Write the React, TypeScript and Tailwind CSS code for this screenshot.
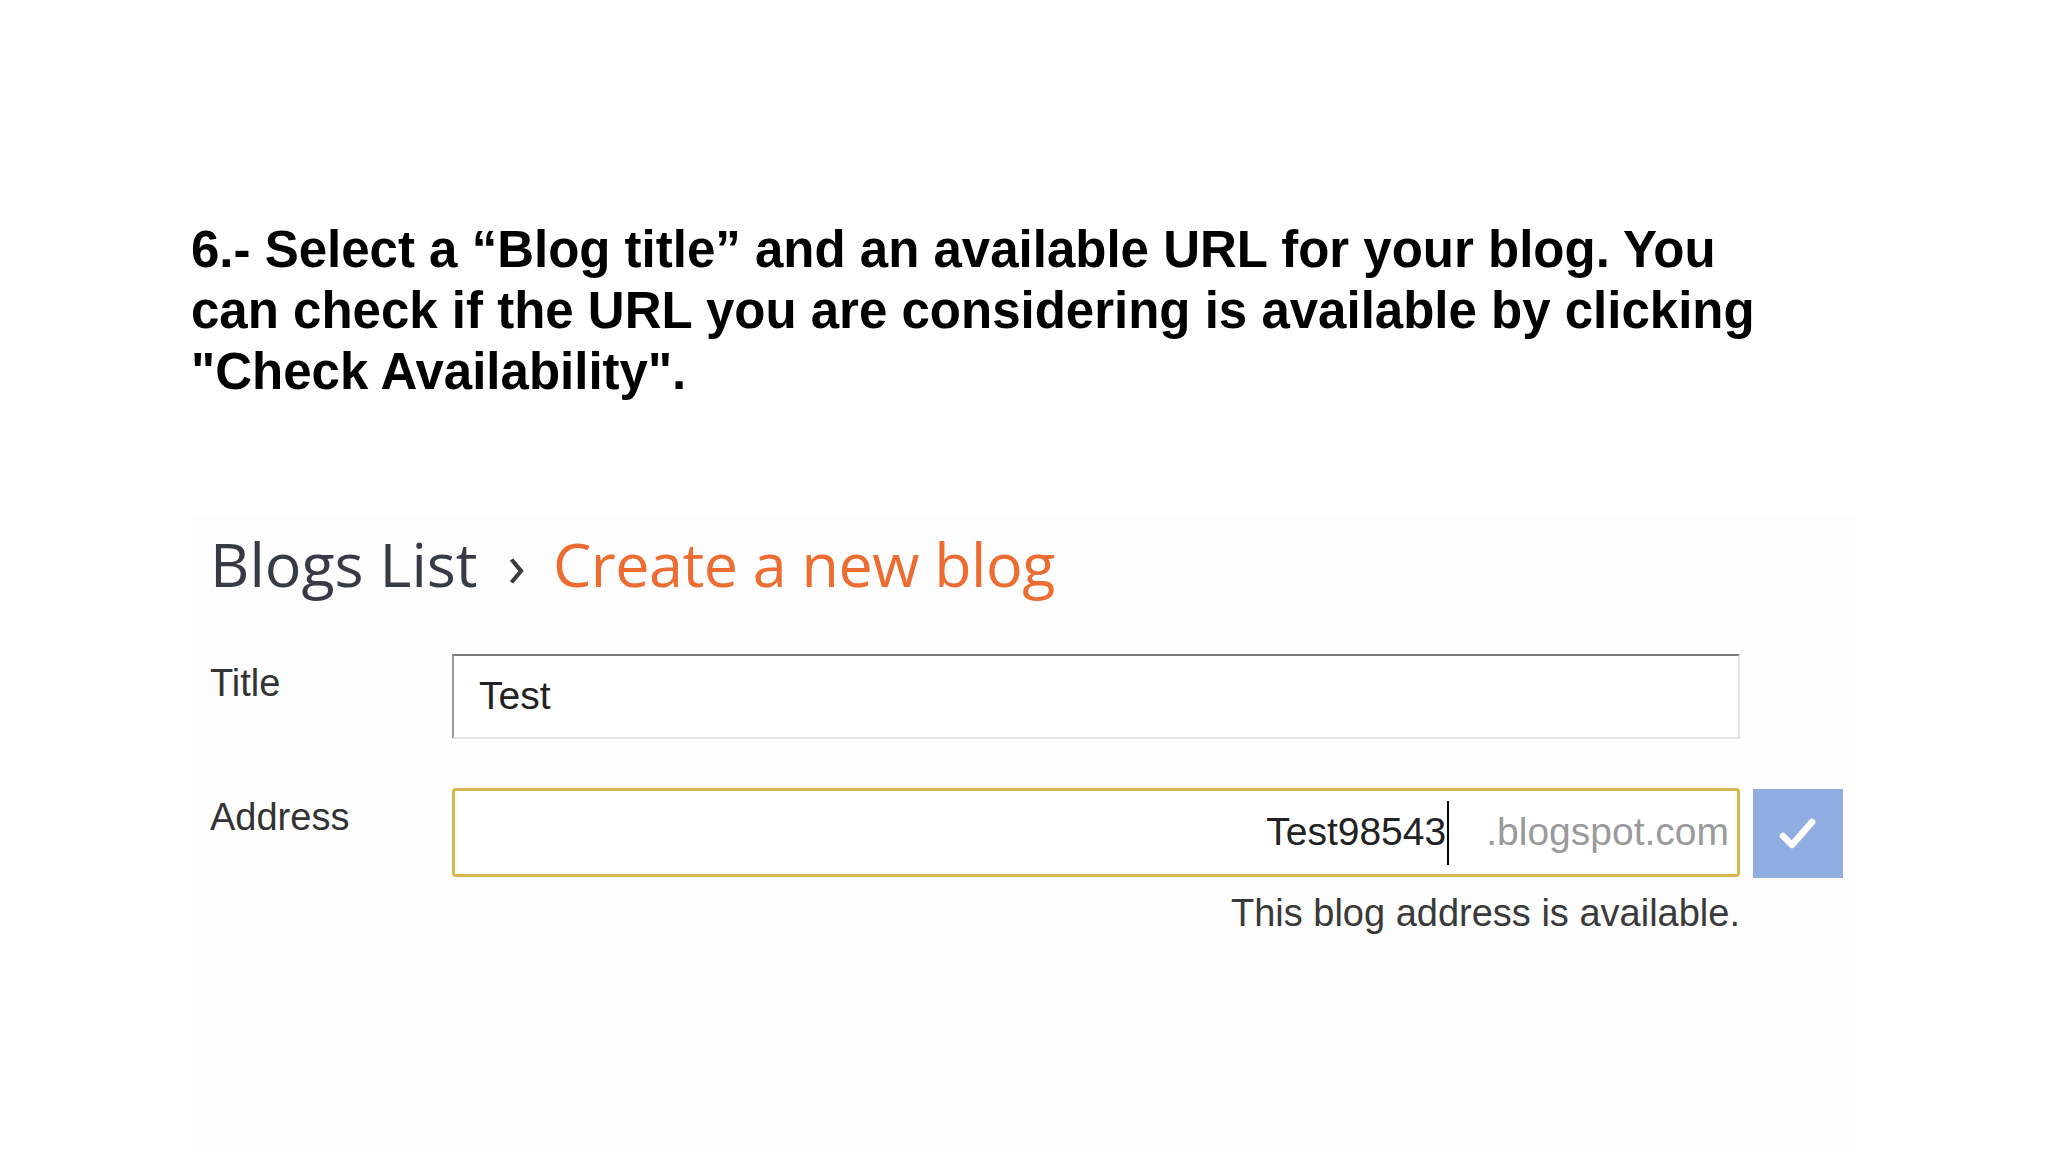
function CheckIcon() {
  return (
    <svg width="42" height="38" viewBox="0 0 42 38" fill="none">
      <polyline
        points="6,21 15,30 35,7"
        stroke="white"
        strokeWidth="6.5"
        strokeLinecap="round"
        strokeLinejoin="round"
      />
    </svg>
  )
}

function Label({ children }: { children: React.ReactNode }) {
  return (
    <div className="w-[242px] shrink-0 pt-[10px] text-[38px] leading-none text-[#333] font-['Liberation_Sans',Arial,sans-serif]">
      {children}
    </div>
  )
}

export default function App() {
  return (
    <div className="w-[2048px] h-[1152px] bg-white overflow-hidden flex flex-col pl-[191px]">
      <h1 className="pt-[219px] text-[51px] leading-[61px] font-bold text-black font-['Liberation_Sans',Arial,sans-serif]">
        6.- Select a “Blog title” and an available URL for your blog. You
        <br />
        can check if the URL you are considering is available by clicking
        <br />
        "Check Availability".
      </h1>

      {/* screenshot panel */}
      <div className="mt-[114px] ml-[2px] w-[1662px] flex-1 bg-[#fdfdfd] pl-[17px] pt-[17px]">
        <div className="flex items-baseline text-[61px] leading-[61px] font-['Open_Sans',sans-serif]">
          <span className="text-[#373b45]">Blogs List</span>
          <span className="ml-[30px] mr-[27px] text-[#3d3d3d]">›</span>
          <span className="text-[#ec6c32] tracking-[-0.5px]">Create a new blog</span>
        </div>

        <div className="mt-[60px] flex items-start">
          <Label>Title</Label>
          <div className="w-[1288px] h-[85px] flex items-center pl-[25px] bg-white border-2 border-t-[#7b7b7b] border-l-[#9a9a9a] border-r-[#e4e4e4] border-b-[#e4e4e4] text-[39px] text-[#222] font-['Liberation_Sans',Arial,sans-serif]">
            Test
          </div>
        </div>

        <div className="mt-[49px] flex items-start">
          <Label>Address</Label>
          <div className="flex flex-col items-end">
            <div className="flex items-start">
              <div className="w-[1288px] h-[89px] flex items-center justify-end pr-[8px] bg-white border-[3px] border-[#d6b74e] rounded-[4px] text-[39px] font-['Liberation_Sans',Arial,sans-serif]">
                <span className="text-[#222]">Test98543</span>
                <span className="w-[2px] h-[64px] bg-black ml-[1px]" />
                <span className="ml-[37px] text-[#9a9a9a]">.blogspot.com</span>
              </div>
              <button className="ml-[13px] mt-[1px] w-[90px] h-[89px] flex items-center justify-center bg-[#8fade0]">
                <CheckIcon />
              </button>
            </div>
            <p className="mt-[16px] mr-[103px] text-[38px] leading-none text-[#3a3a3a] font-['Liberation_Sans',Arial,sans-serif]">
              This blog address is available.
            </p>
          </div>
        </div>
      </div>
    </div>
  )
}
